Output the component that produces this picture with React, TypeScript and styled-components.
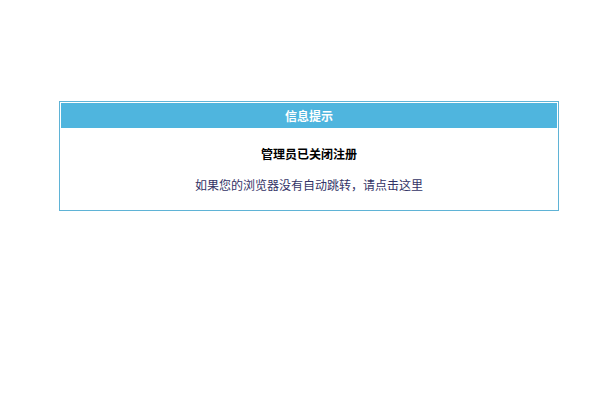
import styled, { createGlobalStyle } from 'styled-components';

const Global = createGlobalStyle`
    body {
        margin: 0;
        background: #fff;
        font-family: "Microsoft YaHei", "Noto Sans CJK SC", sans-serif;
        font-size: 12px;
    }
`;

const Notice = styled.div`
    width: 500px;
    margin: 101px 0 0 59px;
    border: 1px solid #5fb3d6;
    padding: 1px;
    box-sizing: border-box;
    .notice__head {
        height: 25px;
        line-height: 25px;
        background: #4fb5de;
        color: #fff;
        font-weight: bold;
        text-align: center;
    }
    .notice__body {
        padding: 16px 0 14px;
        text-align: center;
        h4 {
            margin: 0;
            line-height: 20px;
            font-size: 12px;
            color: #000;
        }
        p {
            margin: 11px 0 0;
            line-height: 20px;
            color: #333366;
        }
    }
`;

export default () => {
    return (
        <>
            <Global />
            <Notice>
                <div className="notice__head">信息提示</div>
                <div className="notice__body">
                    <h4>管理员已关闭注册</h4>
                    <p>如果您的浏览器没有自动跳转，请点击这里</p>
                </div>
            </Notice>
        </>
    );
};
